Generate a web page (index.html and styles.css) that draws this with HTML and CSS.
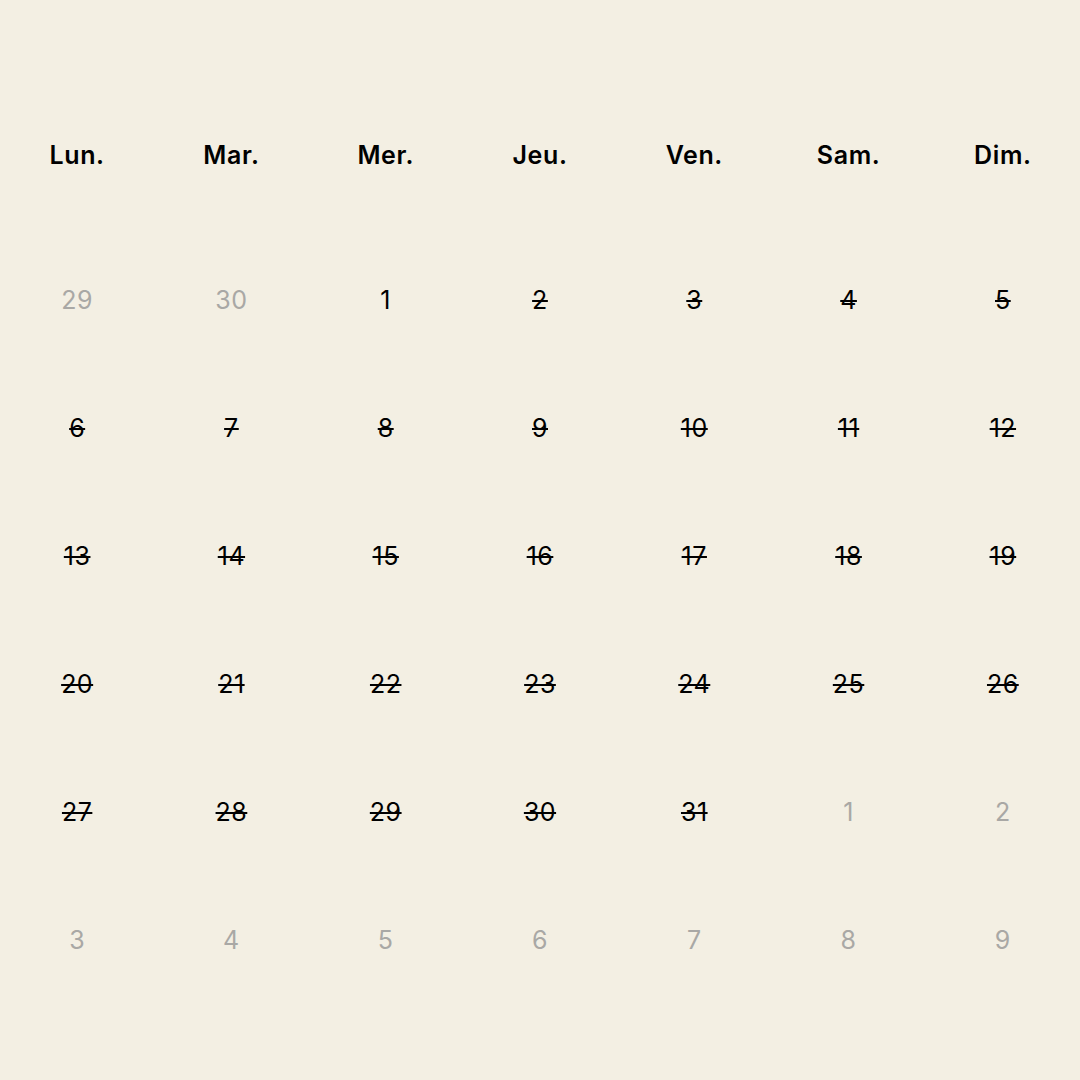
FILE: index.html
```html
<!DOCTYPE html>
<html lang="fr">
<head>
<meta charset="utf-8">
<title>Calendrier</title>
<link rel="stylesheet" href="styles.css">
</head>
<body>
<div class="calendar">
  <div class="head">
    <div>Lun.</div><div>Mar.</div><div>Mer.</div><div>Jeu.</div><div>Ven.</div><div>Sam.</div><div>Dim.</div>
  </div>
  <div class="days">
    <div class="muted">29</div><div class="muted">30</div><div>1</div><div class="off">2</div><div class="off">3</div><div class="off">4</div><div class="off">5</div>
    <div class="off">6</div><div class="off">7</div><div class="off">8</div><div class="off">9</div><div class="off">10</div><div class="off">11</div><div class="off">12</div>
    <div class="off">13</div><div class="off">14</div><div class="off">15</div><div class="off">16</div><div class="off">17</div><div class="off">18</div><div class="off">19</div>
    <div class="off">20</div><div class="off">21</div><div class="off">22</div><div class="off">23</div><div class="off">24</div><div class="off">25</div><div class="off">26</div>
    <div class="off">27</div><div class="off">28</div><div class="off">29</div><div class="off">30</div><div class="off">31</div><div class="muted">1</div><div class="muted">2</div>
    <div class="muted">3</div><div class="muted">4</div><div class="muted">5</div><div class="muted">6</div><div class="muted">7</div><div class="muted">8</div><div class="muted">9</div>
  </div>
</div>
</body>
</html>
```
FILE: styles.css
```css
html, body {
  margin: 0;
  padding: 0;
  background: #f3efe3;
}
body {
  width: 1080px;
  height: 1080px;
  font-family: Inter, "Noto Sans", sans-serif;
  color: #000;
}
.calendar {
  padding-top: 139px;
}
.head, .days {
  display: grid;
  grid-template-columns: repeat(7, 1fr);
}
.head div {
  text-align: center;
  font-size: 25px;
  font-weight: 600;
  letter-spacing: 0.6px;
  line-height: 32px;
  height: 32px;
}
.days {
  margin-top: 65px;
  grid-auto-rows: 128px;
}
.days div {
  display: flex;
  align-items: center;
  justify-content: center;
  font-size: 25px;
  font-weight: 400;
  letter-spacing: 0.5px;
  color: #000;
}
.days .muted {
  color: #a9a8a5;
}
.days .off {
  text-decoration: line-through;
  text-decoration-thickness: 2px;
}
```
